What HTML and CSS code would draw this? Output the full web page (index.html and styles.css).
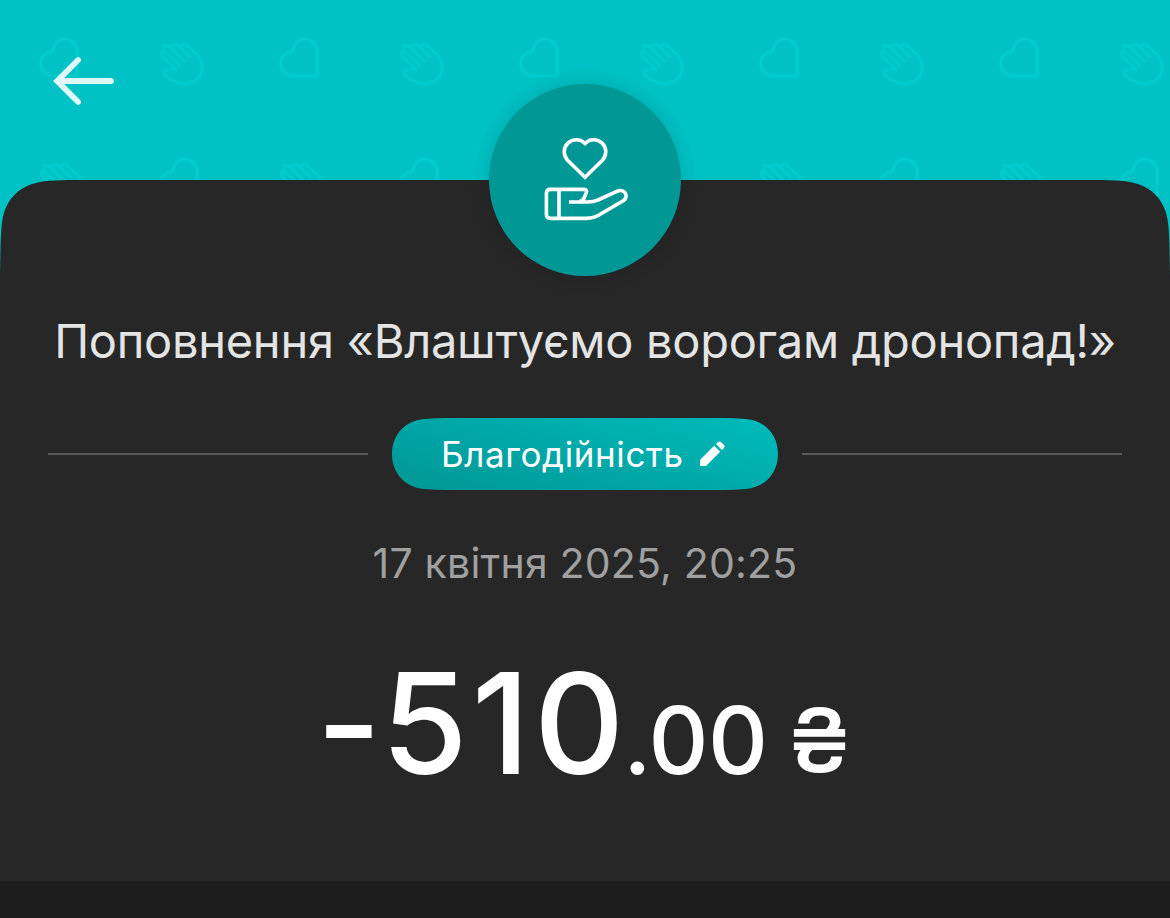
FILE: index.html
```html
<!DOCTYPE html>
<html lang="uk">
	<head>
		<meta charset="utf-8">
		<title>Поповнення</title>
		<meta name="viewport" content="width=device-width">
		<link rel="stylesheet" href="styles.css">
	</head>
	<body>
		<div id="wrap">
			<svg class="pattern" width="1170" height="290" aria-hidden="true">
				<defs>
					<path id="heart" d="M77.2 75.8V51.4A12.3 12.3 0 0 0 52.6 51.6A12.1 12.1 0 0 0 52.6 75.8Z"/>
					<path id="hand" d="M180 65.6L164.8 52C161.5 48.5 163.5 44.6 167.5 45.6L171 48L184.4 61.2M171 48C171.5 44 176 43.6 178.5 46L190 56.5M179.8 47.2C181.5 44 185.5 43.8 188 46.2L198.5 56.5C204.2 63.5 203 73 197.4 79C192 84.4 183.5 85.2 177 82.6C173 80.6 169 78.5 165.5 75.5C162.5 72.6 164.5 69.8 168 69.6L176 69.2L162.8 57.2C159.8 53.8 162 51 164.8 52"/>
					<pattern id="tile" width="240" height="240" patternUnits="userSpaceOnUse">
						<use href="#heart"/>
						<use href="#hand"/>
						<use href="#heart" x="120" y="120"/>
						<use href="#hand" x="-120" y="120"/>
					</pattern>
				</defs>
				<rect width="1170" height="290" fill="url(#tile)" stroke="none"/>
			</svg>
			<header>
				<a href="#" class="back" aria-label="Назад">
					<svg width="62" height="50" viewBox="0 0 62 50">
						<path d="M26.1 4L5.2 25L26.1 46M7 25H59"/>
					</svg>
				</a>
			</header>
			<main>
				<div class="card">
					<h1>Поповнення «Влаштуємо ворогам дронопад!»</h1>
					<div class="category">
						<a href="#" class="pill">
							<span>Благодійність</span>
							<svg width="26" height="26" viewBox="0 0 26 26">
								<path d="M1 25V19L15.2 4.8L21.2 10.8L7 25ZM17 3L18.8 1.2Q20.5 -0.3 22.2 1.2L24.8 3.8Q26.3 5.5 24.8 7.2L23 9Z"/>
							</svg>
						</a>
					</div>
					<time datetime="2025-04-17T20:25">17 квітня 2025, 20:25</time>
					<p class="amount"><span class="minus">-</span><span class="whole">510</span><span class="cents">.00</span><span class="currency">₴</span></p>
				</div>
				<div class="icon">
					<svg width="96" height="96" viewBox="537 132 96 96">
						<path d="M585 177.2L567.6 160.2A12 12 0 0 1 585 143.4A12 12 0 0 1 602.4 160.2Z"/>
						<path d="M569 202H588C592 202 595 201.2 598 200L617.5 191.2C621 189.6 624.5 191 625.7 194C626.7 196.8 625.5 199.2 623.2 200.7L598.5 215.2C594 217.7 590.5 218.4 586 218.4H550.5Q546.4 218.4 546.4 214.3V193.5Q546.4 189.4 550.5 189.4H584Q587.6 189.4 586.2 193L584.3 197.5Q583 200.8 579.5 201.5M559 189.4V218.4"/>
					</svg>
				</div>
			</main>
		</div>
	</body>
</html>
```
FILE: styles.css
```css
* {
	margin: 0;
	padding: 0;
	box-sizing: border-box;
}

body {
	background-color: #1d1d1d;
	font-family: Inter, "Liberation Sans", sans-serif;
}

#wrap {
	position: relative;
	width: 1170px;
	height: 918px;
	margin: 0 auto;
	overflow: hidden;
}

/*背景の模様*/
.pattern {
	position: absolute;
	top: 0;
	left: 0;
	background-color: #00c2c4;
	fill: none;
	stroke: #00cbce;
	stroke-width: 2.8;
	stroke-linejoin: round;
	stroke-linecap: round;
}

header {
	position: relative;
	height: 180px;
	padding: 56px 0 0 52px;
}

.back {
	display: block;
	width: 62px;
	height: 50px;
}

.back svg {
	display: block;
	fill: none;
	stroke: #def7f8;
	stroke-width: 5.8;
	stroke-linecap: round;
}

main {
	position: relative;
}

.card {
	display: flex;
	flex-direction: column;
	align-items: center;
	height: 701px;
	padding-top: 131px;
	background-color: #272727;
	clip-path: path("M0 96C0.6 54 1 43 4.2 32C9 18 18 9 32 4C42 0.7 54 0 76 0H1094C1116 0 1128 0.7 1138 4C1152 9 1161 18 1165.8 32C1169 43 1169.4 54 1170 96V701H0Z");
}

h1 {
	height: 60px;
	line-height: 60px;
	font-size: 47px;
	font-weight: 380;
	letter-spacing: -0.28px;
	white-space: nowrap;
	color: #e4e4e4;
}

.category {
	display: flex;
	align-items: center;
	gap: 24px;
	width: 1074px;
	margin-top: 47px;
}

.category::before,
.category::after {
	content: "";
	flex: 1;
	height: 2px;
	background-color: #5a5a5a;
}

.pill {
	display: flex;
	align-items: center;
	justify-content: space-between;
	width: 386px;
	height: 72px;
	padding: 0 53px 0 49px;
	background: linear-gradient(15deg, #009795, #00bbbc);
	clip-path: path("M0 36C0 17 13 2.5 32 1C40 0.3 48 0 56 0H330C338 0 346 0.3 354 1C373 2.5 386 17 386 36C386 55 373 69.5 354 71C346 71.7 338 72 330 72H56C48 72 40 71.7 32 71C13 69.5 0 55 0 36Z");
	color: #fff;
	font-size: 35px;
	font-weight: 380;
	letter-spacing: 0.6px;
	text-decoration: none;
}

.pill svg {
	fill: #fff;
}

time {
	margin-top: 47px;
	height: 52px;
	line-height: 52px;
	font-size: 41px;
	font-weight: 380;
	letter-spacing: 0.2px;
	color: #a0a0a0;
}

.amount {
	display: flex;
	align-items: baseline;
	margin: 49px 0 0 -5px;
	height: 170px;
	line-height: 170px;
	color: #fff;
	font-weight: 500;
}

.minus,
.whole {
	font-size: 140px;
}

.whole {
	letter-spacing: 4px;
}

.cents {
	margin-left: -5px;
	font-size: 93px;
	letter-spacing: -0.5px;
}

.currency {
	margin-left: 22px;
	font-size: 88px;
	transform: translateY(-2px) scaleX(1.08);
}

.icon {
	position: absolute;
	top: -96px;
	left: 489px;
	display: flex;
	align-items: center;
	justify-content: center;
	width: 192px;
	height: 192px;
	border-radius: 50%;
	background-color: #009795;
	box-shadow: 0 0 20px rgba(0, 0, 0, 0.15);
}

.icon svg {
	fill: none;
	stroke: #fff;
	stroke-width: 3.6;
}
```
